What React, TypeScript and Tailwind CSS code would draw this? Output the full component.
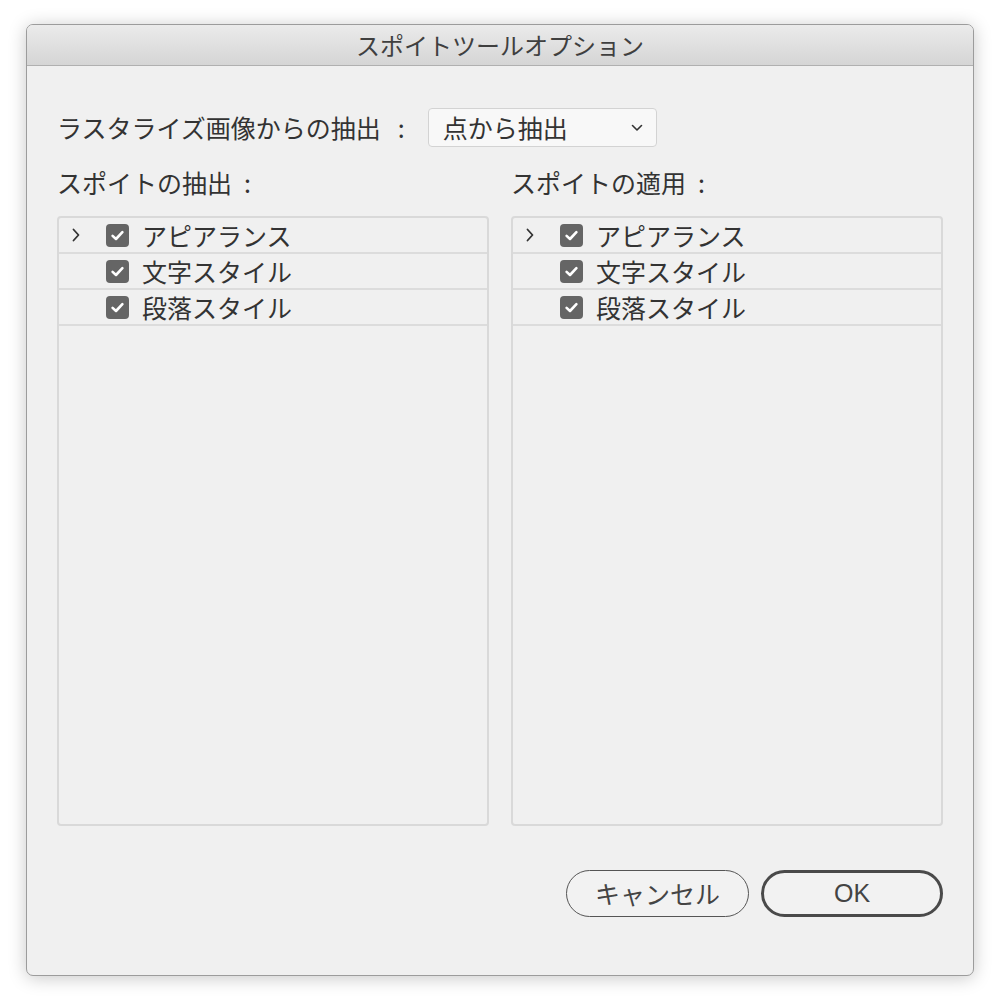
import React from "react";

const font = { fontFamily: '"Noto Sans CJK JP", "Noto Sans", sans-serif' };

function Check() {
  return (
    <div className="w-[23px] h-[23px] rounded-[4px] bg-[#656565] flex items-center justify-center shrink-0">
      <svg width="15" height="15" viewBox="0 0 15 15">
        <path d="M2.6 7.9 L6 11 L12.4 4.2" fill="none" stroke="#ffffff" strokeWidth="2.6" strokeLinecap="round" strokeLinejoin="round" />
      </svg>
    </div>
  );
}

function Chevron() {
  return (
    <svg width="10" height="16" viewBox="0 0 10 16" className="shrink-0">
      <path d="M2.5 2.5 L7.5 8 L2.5 13.5" fill="none" stroke="#333" strokeWidth="1.8" strokeLinecap="round" strokeLinejoin="round" />
    </svg>
  );
}

function Row({ label, chevron }: { label: string; chevron?: boolean }) {
  return (
    <div className="h-[36px] border-b-2 border-[#dcdcdc] flex items-center">
      <div className="w-[47px] pl-[12px] flex items-center">{chevron ? <Chevron /> : null}</div>
      <Check />
      <span className="ml-[13px] text-[25px] leading-none text-[#333]">{label}</span>
    </div>
  );
}

function List() {
  return (
    <div className="h-[610px] border-2 border-[#d9d9d9] rounded-[4px] bg-[#f0f0f0] overflow-hidden">
      <Row label="アピアランス" chevron />
      <Row label="文字スタイル" />
      <Row label="段落スタイル" />
    </div>
  );
}

function Label({ text }: { text: string }) {
  return (
    <div className="h-[34px] flex items-center text-[25px] leading-none text-[#333]">
      <span>{text}</span>
      <span className="ml-[12px]">:</span>
    </div>
  );
}

export default function App() {
  return (
    <div className="w-[1001px] h-[1001px] bg-white pt-[24px] pl-[26px]" style={font}>
      <div className="w-[948px] h-[952px] rounded-[7px] border border-[#9c9c9c] bg-[#f0f0f0] overflow-hidden shadow-[0_2px_18px_rgba(0,0,0,0.22)] flex flex-col">
        <div className="h-[41px] shrink-0 bg-gradient-to-b from-[#ebebeb] to-[#d5d5d5] border-b border-[#b0b0b0] flex items-center justify-center">
          <span className="text-[24px] leading-none text-[#3f3f3f]">スポイトツールオプション</span>
        </div>
        <div className="flex-1 pl-[30px] pr-[29px] pt-[42px]">
          <div className="h-[39px] flex items-center">
            <span className="text-[25px] leading-none text-[#333]">ラスタライズ画像からの抽出</span>
            <span className="ml-[17px] text-[25px] leading-none text-[#333]">:</span>
            <div className="ml-[23px] w-[229px] h-[39px] rounded-[4px] border border-[#d3d3d3] bg-[#f8f8f8] flex items-center pl-[14px] pr-[13px]">
              <span className="text-[25px] leading-none text-[#333] flex-1">点から抽出</span>
              <svg width="12" height="8" viewBox="0 0 12 8">
                <path d="M1.5 1.5 L6 6 L10.5 1.5" fill="none" stroke="#333" strokeWidth="1.6" strokeLinecap="round" strokeLinejoin="round" />
              </svg>
            </div>
          </div>
          <div className="mt-[18px] grid grid-cols-[432px_432px] gap-x-[22px]">
            <Label text="スポイトの抽出" />
            <Label text="スポイトの適用" />
            <div className="mt-[17px]"><List /></div>
            <div className="mt-[17px]"><List /></div>
          </div>
          <div className="mt-[44px] w-[886px] flex justify-end gap-[12px]">
            <button className="w-[183px] h-[47px] rounded-full border-[1.5px] border-[#555] bg-[#f2f2f2] text-[25px] leading-none text-[#444] flex items-center justify-center">
              キャンセル
            </button>
            <button className="w-[182px] h-[47px] rounded-full border-[3px] border-[#4a4a4a] bg-[#f2f2f2] text-[25px] leading-none text-[#444] flex items-center justify-center" style={{ fontFamily: '"Liberation Sans", "Noto Sans", sans-serif' }}>
              OK
            </button>
          </div>
        </div>
      </div>
    </div>
  );
}
